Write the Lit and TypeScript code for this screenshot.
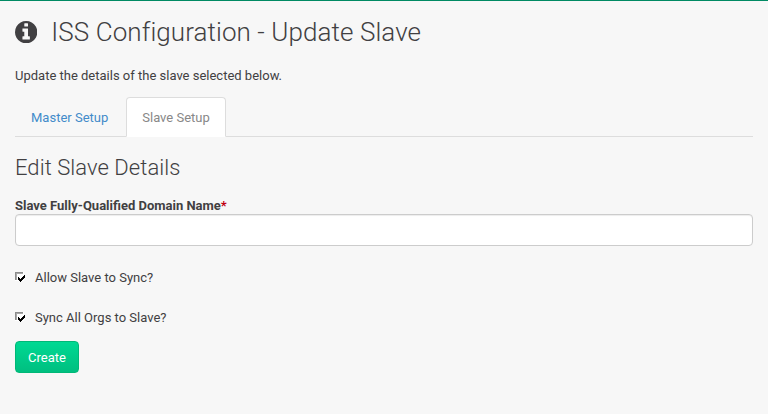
import { LitElement, html, css } from "lit";
import { customElement, property } from "lit/decorators.js";

@customElement("sync-option")
class SyncOption extends LitElement {
  @property() label = "";
  static styles = css`
    :host { display: flex; align-items: center; height: 20px; margin-bottom: 20px; }
    .box { display: block; width: 12px; height: 12px; margin-right: 8px; }
  `;
  render() {
    return html`
      <svg class="box" viewBox="0 0 12 12" shape-rendering="crispEdges" role="img" aria-label="checked">
        <rect x="0" y="0" width="9" height="9" fill="#fff" />
        <path d="M0 0H8V1H1V8H0Z" fill="#8c8c8c" />
        <path d="M1 1H8V2H2V8H1Z" fill="#a8a8a8" />
        <path d="M3 5h1v3h-1zM4 6h1v3h-1zM5 7h1v3h-1zM6 6h1v3h-1zM7 5h1v3h-1zM8 4h1v3h-1zM9 3h1v3h-1z" fill="#000" />
      </svg>
      <span>${this.label}</span>
    `;
  }
}

@customElement("app-root")
class AppRoot extends LitElement {
  static styles = css`
    :host {
      display: block;
      box-sizing: border-box;
      height: 414px;
      padding: 12px 15px 0;
      background: #f7f7f7;
      border-top: 1px solid #008a63;
      color: #414042;
      font: 13px/20px Roboto, sans-serif;
      overflow: hidden;
    }
    h1, h2, p { margin: 0; }
    h1 { display: flex; align-items: center; height: 38px; font-size: 26px; font-weight: 300; letter-spacing: 0.08px; }
    .info { width: 22.3px; height: 22.3px; margin-right: 14px; }
    p { margin-top: 15px; }
    .tabs { display: flex; gap: 2px; margin-top: 11px; border-bottom: 1px solid #ddd; }
    .tab {
      box-sizing: border-box;
      height: 40px;
      padding: 10px 15px;
      margin-bottom: -1px;
      border: 1px solid transparent;
      border-radius: 4px 4px 0 0;
      color: #428bca;
      text-decoration: none;
    }
    .tab.active { color: #888; background: #fff; border-color: #ddd; border-bottom-color: #fff; }
    h2 { height: 30px; margin-top: 16px; font-size: 22px; line-height: 30px; font-weight: 300; letter-spacing: 0.06px; }
    label { display: block; height: 18px; margin-top: 13px; font-weight: 700; line-height: 20px; }
    .required { color: #c00010; }
    input {
      display: block;
      box-sizing: border-box;
      width: 100%;
      height: 32px;
      margin: 0 0 22px;
      padding: 6px 12px;
      border: 1px solid #ccc;
      border-radius: 4px;
      background: #fff;
      box-shadow: inset 0 1px 1px rgba(0, 0, 0, 0.075);
      font: inherit;
    }
    button {
      display: block;
      box-sizing: border-box;
      width: 64px;
      height: 32px;
      margin-top: -7px;
      padding: 2px 0 0;
      border: 1px solid #00b877;
      border-radius: 4px;
      background: linear-gradient(#00d993, #00bf80);
      color: #fff;
      font: inherit;
    }
  `;
  render() {
    return html`
      <h1>
        <svg class="info" viewBox="0 128 1536 1536" aria-hidden="true">
          <path fill="#414042" d="M1024 1376v-160q0-14-9-23t-23-9h-96v-512q0-14-9-23t-23-9h-320q-14 0-23 9t-9 23v160q0 14 9 23t23 9h96v320h-96q-14 0-23 9t-9 23v160q0 14 9 23t23 9h448q14 0 23-9t9-23zm-128-896v-160q0-14-9-23t-23-9h-192q-14 0-23 9t-9 23v160q0 14 9 23t23 9h192q14 0 23-9t9-23zm640 416q0 209-103 385.500t-279.500 279.500-385.500 103-385.500-103-279.500-279.500-103-385.500 103-385.500 279.500-279.500 385.500-103 385.500 103 279.500 279.500 103 385.500z" />
        </svg>
        <span>ISS Configuration - Update Slave</span>
      </h1>
      <p>Update the details of the slave selected below.</p>
      <nav class="tabs">
        <a class="tab">Master Setup</a>
        <a class="tab active">Slave Setup</a>
      </nav>
      <h2>Edit Slave Details</h2>
      <label for="fqdn">Slave Fully-Qualified Domain Name<span class="required">*</span></label>
      <input id="fqdn" type="text" />
      <sync-option label="Allow Slave to Sync?"></sync-option>
      <sync-option label="Sync All Orgs to Slave?"></sync-option>
      <button>Create</button>
    `;
  }
}
